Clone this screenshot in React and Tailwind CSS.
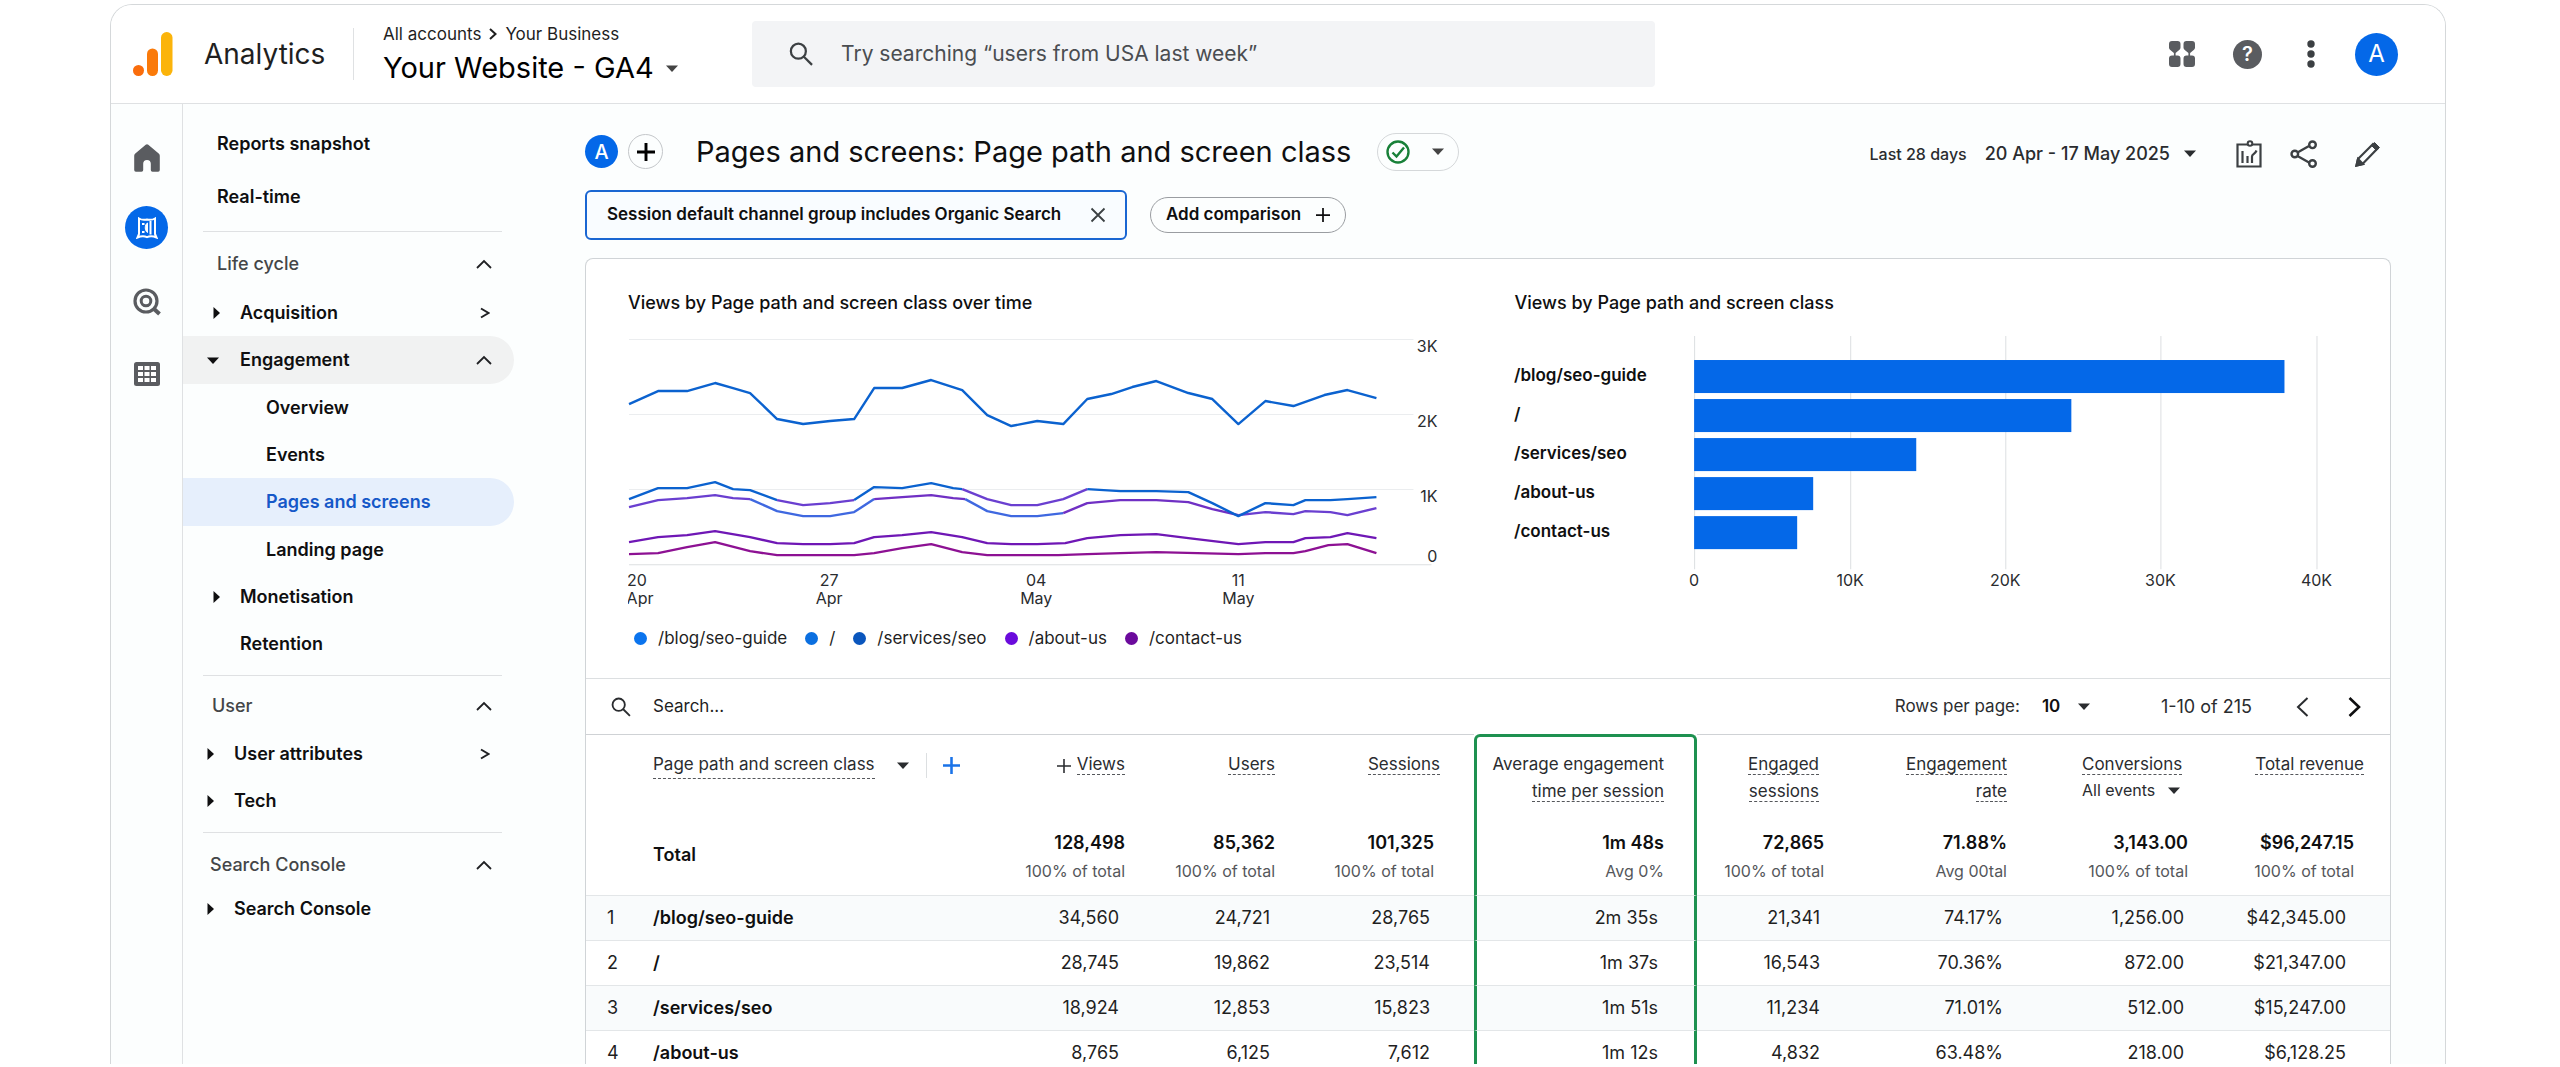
const NAV_ROW = 'flex w-full items-center text-left text-lg font-semibold text-[#0f0f10]';

const Caret = ({ className = '' }) => (
  <svg viewBox="0 0 12 7" className={`h-[7px] w-3 shrink-0 ${className}`} fill="currentColor" aria-hidden="true">
    <path d="M0 0.5h12L6 7z" />
  </svg>
);

const CaretRight = () => (
  <svg viewBox="0 0 7 12" className="h-3 w-[7px]" fill="currentColor" aria-hidden="true">
    <path d="M0.5 0v12L7 6z" />
  </svg>
);

const ChevronUp = () => (
  <svg viewBox="0 0 16 10" className="h-[10px] w-4" fill="none" stroke="#202124" strokeWidth="1.8" aria-hidden="true">
    <path d="M1 9l7-7 7 7" />
  </svg>
);

const Greater = () => (
  <svg viewBox="0 0 10 12" className="h-3 w-[10px]" fill="none" stroke="#202124" strokeWidth="2" aria-hidden="true">
    <path d="M1 1.5l7.5 4.5L1 10.5" />
  </svg>
);

const Plus = ({ className, strokeWidth = 2 }) => (
  <svg viewBox="0 0 16 16" className={className} fill="none" stroke="currentColor" strokeWidth={strokeWidth} aria-hidden="true">
    <path d="M8 0v16M0 8h16" />
  </svg>
);

const SearchIcon = ({ className }) => (
  <svg viewBox="0 0 26 26" className={className} fill="none" stroke="currentColor" strokeWidth="2.4" aria-hidden="true">
    <circle cx="10" cy="10" r="8" />
    <path d="M15.6 15.6l9 9" />
  </svg>
);

function TopBar() {
  return (
    <header className="flex h-[99px] shrink-0 items-center border-b border-[#dfe1e3] bg-white pr-[47px] pl-[22px]">
      <svg viewBox="0 0 40 44" className="h-11 w-10" aria-hidden="true">
        <rect x="28" y="0" width="11.5" height="44" rx="5.7" fill="#fbb40b" />
        <rect x="14" y="16.5" width="11" height="27.5" rx="5.5" fill="#fa7a0a" />
        <circle cx="5.5" cy="38.5" r="5.5" fill="#fa6d0c" />
      </svg>
      <span className="ml-[31px] w-[149px] text-[28px] text-[#1f1f1f]">Analytics</span>
      <div className="flex h-[52px] flex-col justify-center border-l border-[#dfe1e3] pl-[29px]">
        <div className="flex items-center gap-2 pt-1 text-[17px] leading-6 text-[#1f1f1f]">
          <a href="#accounts">All accounts</a>
          <svg viewBox="0 0 8 12" className="h-3 w-2" fill="none" stroke="currentColor" strokeWidth="2" aria-hidden="true">
            <path d="M1 1l5.5 5L1 11" />
          </svg>
          <a href="#business">Your Business</a>
        </div>
        <button type="button" className="flex items-center gap-3 text-[29px] leading-11 text-black">
          Your Website - GA4
          <Caret className="text-[#444]" />
        </button>
      </div>
      <label className="ml-[74px] flex h-[66px] w-[903px] items-center gap-7 rounded-sm bg-[#f3f4f6] px-[37px] text-[#3c4043]">
        <SearchIcon className="size-[26px]" />
        <input
          type="text"
          aria-label="Search analytics"
          placeholder="Try searching “users from USA last week”"
          className="w-full bg-transparent text-[21px] outline-none placeholder:text-[#4a4d51]"
        />
      </label>
      <div className="ml-auto flex items-center text-[#5a5c60]">
        <button type="button" aria-label="Apps">
          <svg viewBox="0 0 26 26" className="size-[26px]" fill="currentColor" aria-hidden="true">
            <path d="M3 0h5.500a3 3 0 0 1 3 3v3.500a3 3 0 0 1-1 2.200L6.600 12v2.500h1.900a3 3 0 0 1 3 3V23a3 3 0 0 1-3 3H3a3 3 0 0 1-3-3v-5.500a3 3 0 0 1 3-3h1.900V12L1 8.700a3 3 0 0 1-1-2.200V3a3 3 0 0 1 3-3z" />
            <path d="M17.500 0H23a3 3 0 0 1 3 3v3.500a3 3 0 0 1-1 2.200L21.100 12v2.500H23a3 3 0 0 1 3 3V23a3 3 0 0 1-3 3h-5.500a3 3 0 0 1-3-3v-5.500a3 3 0 0 1 3-3h1.900V12l-3.900-3.300a3 3 0 0 1-1-2.200V3a3 3 0 0 1 3-3z" />
          </svg>
        </button>
        <button type="button" aria-label="Help" className="ml-[38px] flex size-[29px] items-center justify-center rounded-full bg-[#5a5c60] text-xl font-semibold text-white">
          ?
        </button>
        <button type="button" aria-label="More" className="ml-[45px]">
          <svg viewBox="0 0 8 28" className="h-7 w-2" fill="#3c4043" aria-hidden="true">
            <circle cx="4" cy="4" r="3.7" />
            <circle cx="4" cy="14" r="3.7" />
            <circle cx="4" cy="24" r="3.7" />
          </svg>
        </button>
        <button type="button" aria-label="Account" className="ml-10 flex size-[43px] items-center justify-center rounded-full bg-[#0468e8] text-2xl text-white">
          A
        </button>
      </div>
    </header>
  );
}

function Rail() {
  return (
    <nav aria-label="Sections" className="flex w-[72px] shrink-0 flex-col items-center border-r border-[#dfe1e3] pt-10 text-[#5a5c60]">
      <button type="button" aria-label="Home">
        <svg viewBox="0 0 26 28" className="h-7 w-[26px]" fill="currentColor" aria-hidden="true">
          <path d="M13 0.3a2 2 0 0 1 1.3.5l10.400 8.600a3 3 0 0 1 1.100 2.300V26a1.700 1.700 0 0 1-1.700 1.700H18.500a1.700 1.700 0 0 1-1.700-1.700v-6.200a3.800 3.800 0 0 0-7.600 0V26a1.700 1.700 0 0 1-1.700 1.700H1.900A1.700 1.700 0 0 1 .2 26V11.700a3 3 0 0 1 1.100-2.300L11.700.8a2 2 0 0 1 1.300-.5z" />
        </svg>
      </button>
      <button type="button" aria-label="Reports" className="mt-[34px] flex size-[43px] items-center justify-center rounded-full bg-[#0468e8]">
        <svg viewBox="0 0 22 22" className="size-[22px]" fill="none" stroke="#fff" strokeWidth="2" aria-hidden="true">
          <path d="M3 1.500c2.500 1.500 5.500 1.500 8 1 2.500.5 5.500.5 8-1v15.500l1.500 3.500c-3.500-1.500-6.500-1.800-9.500-.3-3-1.500-6-1.200-9.500.3L3 17z" />
          <path d="M14.500 4v13.500" />
          <path d="M6 7h2.500M6 15h2.500" />
          <path d="M11.500 6v9.500c-3-1.500-3-8 0-9.500z" fill="#fff" strokeWidth="1" />
        </svg>
      </button>
      <button type="button" aria-label="Explore" className="mt-[39px]">
        <svg viewBox="0 0 28 28" className="size-7" fill="none" stroke="currentColor" aria-hidden="true">
          <circle cx="13" cy="13" r="11" strokeWidth="3.2" />
          <circle cx="13" cy="13" r="4.8" strokeWidth="3" />
          <path d="M20 20l6.5 6" strokeWidth="4" />
        </svg>
      </button>
      <button type="button" aria-label="Library" className="mt-[46px]">
        <svg viewBox="0 0 26 24" className="h-6 w-[26px]" aria-hidden="true">
          <rect width="26" height="24" rx="2.5" fill="#5a5c60" />
          {[4, 10.5, 17].map((x) =>
            [4, 10, 16].map((y) => <rect key={`${x}-${y}`} x={x} y={y} width="5" height="4" fill="#fff" />),
          )}
        </svg>
      </button>
    </nav>
  );
}

function Group({ label, pad }) {
  return (
    <button type="button" className={`flex h-12 w-full items-center justify-between pr-[22px] text-lg font-medium text-[#444648] ${pad}`}>
      {label}
      <ChevronUp />
    </button>
  );
}

function Branch({ label, arrow = true, more = false, pad = 'pl-[30px]' }) {
  return (
    <button type="button" className={`${NAV_ROW} h-[47px] pr-6 ${pad}`}>
      <span className="w-[27px]">{arrow && <CaretRight />}</span>
      <span className="flex-1">{label}</span>
      {more && <Greater />}
    </button>
  );
}

function Sidebar() {
  return (
    <nav aria-label="Reports" className="flex w-[331px] shrink-0 flex-col pt-[13px]">
      <a href="#snapshot" className={`${NAV_ROW} h-[53px] pl-[34px]`}>Reports snapshot</a>
      <a href="#realtime" className={`${NAV_ROW} h-[53px] pl-[34px]`}>Real-time</a>
      <hr className="mt-2 mr-3 ml-5 border-[#dfe1e3]" />
      <div className="mt-2 mb-px"><Group label="Life cycle" pad="pl-[34px]" /></div>
      <Branch label="Acquisition" more />
      <button type="button" className={`${NAV_ROW} h-12 rounded-r-full bg-[#f1f2f2] pr-[22px] pl-6`}>
        <Caret className="mr-[21px]" />
        <span className="flex-1">Engagement</span>
        <ChevronUp />
      </button>
      <a href="#overview" className={`${NAV_ROW} h-[47px] pl-[83px]`}>Overview</a>
      <a href="#events" className={`${NAV_ROW} h-[47px] pl-[83px]`}>Events</a>
      <a href="#pages" aria-current="page" className="flex h-12 items-center rounded-r-full bg-[#e6effc] pl-[83px] text-lg font-semibold text-[#1558c8]">
        Pages and screens
      </a>
      <a href="#landing" className={`${NAV_ROW} h-[47px] pl-[83px]`}>Landing page</a>
      <Branch label="Monetisation" />
      <Branch label="Retention" arrow={false} />
      <hr className="mt-2 mr-3 ml-5 border-[#dfe1e3]" />
      <div className="mt-[6px]"><Group label="User" pad="pl-[29px]" /></div>
      <Branch label="User attributes" more pad="pl-6" />
      <Branch label="Tech" pad="pl-6" />
      <hr className="mt-2 mr-3 ml-5 border-[#dfe1e3]" />
      <div className="mt-2 -mb-1"><Group label="Search Console" pad="pl-[27px]" /></div>
      <Branch label="Search Console" pad="pl-6" />
    </nav>
  );
}

function ReportHeader() {
  return (
    <div className="flex h-[47px] items-center">
      <span className="flex size-[33px] items-center justify-center rounded-full bg-[#0468e8] text-xl font-medium text-white">A</span>
      <button type="button" aria-label="Add segment" className="ml-[10px] flex size-[35px] items-center justify-center rounded-full border border-[#c4c7ca] text-black">
        <Plus className="size-[18px]" strokeWidth={2.6} />
      </button>
      <h1 className="ml-[33px] text-[29px] text-[#0f0f10]">Pages and screens: Page path and screen class</h1>
      <button type="button" aria-label="Report status" className="ml-[26px] flex h-[38px] w-[82px] items-center justify-between rounded-full border border-[#d5d8da] pr-[14px] pl-2 text-[#444]">
        <svg viewBox="0 0 24 24" className="size-6" fill="none" stroke="#188038" strokeWidth="2.4" aria-hidden="true">
          <circle cx="12" cy="12" r="10.5" />
          <path d="M6.5 12.500l4 4 7.500-9" />
        </svg>
        <Caret />
      </button>
      <button type="button" className="ml-auto flex items-center pt-1 text-lg font-medium text-[#2a2c2f]">
        <span className="mr-[18px] text-base">Last 28 days</span>
        20 Apr - 17 May 2025
        <Caret className="ml-[14px]" />
      </button>
      <div className="ml-10 flex items-center pt-1 text-[#3c4043]">
        <button type="button" aria-label="Insights">
          <svg viewBox="0 0 26 28" className="h-7 w-[26px]" fill="none" stroke="currentColor" strokeWidth="2.2" aria-hidden="true">
            <path d="M1.500 4.500h23v22h-23zM6.500 11v12M11.500 23v-7M16 23v-6.500c0-2.500 3-2 4.500-6" />
            <circle cx="14" cy="3.500" r="2.300" fill="#fff" strokeWidth="2" />
          </svg>
        </button>
        <button type="button" aria-label="Share" className="ml-7">
          <svg viewBox="0 0 28 28" className="size-7" fill="none" stroke="currentColor" strokeWidth="2.4" aria-hidden="true">
            <path d="M7.500 12.500L19 6M7.500 16L19 22.500" />
            <circle cx="4.800" cy="14" r="3.300" />
            <circle cx="22.500" cy="4.800" r="3.300" />
            <circle cx="22.500" cy="23.500" r="3.300" />
          </svg>
        </button>
        <button type="button" aria-label="Edit" className="ml-[37px]">
          <svg viewBox="0 0 26 26" className="size-[26px]" fill="none" stroke="currentColor" strokeWidth="2.2" aria-hidden="true">
            <path d="M1.500 24.500l1.500-6.500L18 3l4.500 4.500L7.500 23z" />
            <path d="M1.500 24.500l1.500-6.500 5 5z" fill="currentColor" />
            <path d="M16.500 4.500l5 5 3-3-5-5z" fill="currentColor" strokeWidth="1" />
          </svg>
        </button>
      </div>
    </div>
  );
}

function Comparisons() {
  return (
    <div className="mt-[15px] flex h-[50px] items-center">
      <div className="flex h-[50px] w-[542px] items-center justify-between rounded-md border-2 border-[#1a66d2] bg-[#f9fcff] pr-[19px] pl-5 text-[17px] font-semibold text-[#0f0f10]">
        Session default channel group includes Organic Search
        <button type="button" aria-label="Remove comparison">
          <svg viewBox="0 0 16 16" className="size-4" fill="none" stroke="#3c4043" strokeWidth="1.8" aria-hidden="true">
            <path d="M1.500 1.500l13 13M14.500 1.500l-13 13" />
          </svg>
        </button>
      </div>
      <button type="button" className="ml-[23px] flex h-9 w-[196px] items-center justify-between rounded-full border border-[#9a9da1] px-[15px] text-[17px] font-semibold text-[#0f0f10]">
        Add comparison
        <Plus className="size-[14px]" />
      </button>
    </div>
  );
}

const BLUE = '#0b62cf';
const VIOLET = '#6a3fd0';

const SERIES = [
  { color: BLUE, points: '1,75 30,62 59,62 87,54 105,59 122,64 149,90 175,95 202,92 226,90 246,59 274,59 303,51 334,61 359,86 383,97 409,92 435,95 459,70 483,65 504,58 528,52 560,64 584,70 610,95 637,72 665,77 696,66 719,61 748,69' },
  { color: BLUE, points: '1,170 30,159 59,159 87,153 105,160 122,161 149,171' },
  { color: VIOLET, points: '149,171 175,176 202,174 226,171' },
  { color: BLUE, points: '226,171 246,158 274,159 303,154 325,159 334,160' },
  { color: VIOLET, points: '334,160 359,170 383,176 409,176 435,170 459,160' },
  { color: VIOLET, points: '1,178 30,171 59,169 87,166 105,169 122,170' },
  { color: '#3f68e0', points: '122,170 149,182 175,187 202,187 226,183 246,170' },
  { color: '#7030c4', points: '246,170 274,168 303,166 325,169 337,170' },
  { color: '#3f68e0', points: '337,170 359,182 383,187 409,187 435,184' },
  { color: '#7030c4', points: '435,184 459,174 492,171 528,171 560,173 584,180 610,186' },
  { color: VIOLET, points: '610,186 637,183 665,185 677,182 702,183 719,186 748,179' },
  { color: BLUE, points: '459,160 492,162 528,162 560,163 584,174 610,187 637,174 665,176 677,171 702,171 719,170 748,168' },
  { color: '#6f17b5', points: '1,213 30,208 59,206 87,202 122,208 149,214 175,215 202,215 226,214 246,208 274,206 303,203 334,208 359,214 383,215 409,215 437,214 459,209 492,206 528,205 560,209 610,215 637,213 665,213 677,209 702,208 719,204 748,209' },
  { color: '#8d1193', points: '1,225 30,224 59,218 87,213 122,222 149,226 226,226 246,224 274,219 303,215 334,223 359,226 430,226 459,225 492,224 528,223 610,225 637,224 665,224 677,222 700,216 719,215 748,224' },
];

function LineChart() {
  return (
    <svg viewBox="0 0 810 285" className="mt-3 block h-auto w-full" role="img" aria-label="Views over time">
      {[10, 85, 160, 235].map((y) => (
        <path key={y} d={`M1 ${y}.5H${y === 235 ? 803 : 785}`} stroke={y === 235 ? '#dcdfe1' : '#ebedef'} />
      ))}
      {SERIES.map((s, i) => (
        <polyline key={i} points={s.points} fill="none" stroke={s.color} strokeWidth="2.4" strokeLinejoin="round" />
      ))}
      <g fontSize="16" fill="#2a2c2f" textAnchor="end">
        <text x="809" y="23">3K</text>
        <text x="809" y="98">2K</text>
        <text x="809" y="173">1K</text>
        <text x="809" y="233">0</text>
      </g>
      <g fontSize="16" fill="#2a2c2f" textAnchor="middle">
        {[[9, '20', 12, 'Apr'], [201, '27', 201, 'Apr'], [408, '04', 408, 'May'], [610, '11', 610, 'May']].map(([x, day, mx, month]) => (
          <g key={day}>
            <text x={x} y="257">{day}</text>
            <text x={mx} y="275">{month}</text>
          </g>
        ))}
      </g>
    </svg>
  );
}

const LEGEND = [
  ['/blog/seo-guide', 'bg-[#0b74ee]'],
  ['/', 'bg-[#0b6fe0]'],
  ['/services/seo', 'bg-[#0a56bd]'],
  ['/about-us', 'bg-[#6a0bdc]'],
  ['/contact-us', 'bg-[#6b0a9c]'],
];

const BARS = [
  ['/blog/seo-guide', 590],
  ['/', 377],
  ['/services/seo', 222],
  ['/about-us', 119],
  ['/contact-us', 103],
];

function BarChart() {
  return (
    <svg viewBox="0 0 820 260" className="mt-3 block h-auto w-full" role="img" aria-label="Views by page path">
      {[180, 336, 491, 646, 802].map((x, i) => (
        <g key={x}>
          <path d={`M${x}.5 7V240`} stroke="#dcdfe1" />
          <text x={x} y="257" fontSize="16" fill="#2a2c2f" textAnchor="middle">{i === 0 ? '0' : `${i}0K`}</text>
        </g>
      ))}
      {BARS.map(([label, width], i) => (
        <g key={label}>
          <text x="0" y={52 + i * 39} fontSize="17" fontWeight="600" fill="#0f0f10">{label}</text>
          <rect x="180" y={31 + i * 39} width={width} height="33" fill="#0468e8" />
        </g>
      ))}
    </svg>
  );
}

const COLUMNS = [
  { w: 'w-[155px]', head: 'pr-[15px]', total: 'pr-[15px]', row: 'pr-[21px]' },
  { w: 'w-[150px]', head: 'pr-[15px]', total: 'pr-[15px]', row: 'pr-5' },
  { w: 'w-[184px]', head: 'pr-[34px]', total: 'pr-10', row: 'pr-11' },
  { w: 'w-[223px]', head: 'pr-[30px]', total: 'pr-[30px]', row: 'pr-9' },
  { w: 'w-[143px]', head: 'pr-[21px]', total: 'pr-4', row: 'pr-5' },
  { w: 'w-[183px]', head: 'pr-4', total: 'pr-4', row: 'pr-5' },
  { w: 'w-[181px]', head: 'pr-6', total: 'pr-4', row: 'pr-5' },
  { w: 'w-[186px]', head: 'pr-[26px]', total: 'pr-9', row: 'pr-11' },
];

const HEADS = [['Views'], ['Users'], ['Sessions'], ['Average engagement', 'time per session'], ['Engaged', 'sessions'], ['Engagement', 'rate'], ['Conversions'], ['Total revenue']];

const TOTALS = [
  ['128,498', '100% of total'],
  ['85,362', '100% of total'],
  ['101,325', '100% of total'],
  ['1m 48s', 'Avg 0%'],
  ['72,865', '100% of total'],
  ['71.88%', 'Avg 00tal'],
  ['3,143.00', '100% of total'],
  ['$96,247.15', '100% of total'],
];

const ROWS = [
  ['/blog/seo-guide', '34,560', '24,721', '28,765', '2m 35s', '21,341', '74.17%', '1,256.00', '$42,345.00'],
  ['/', '28,745', '19,862', '23,514', '1m 37s', '16,543', '70.36%', '872.00', '$21,347.00'],
  ['/services/seo', '18,924', '12,853', '15,823', '1m 51s', '11,234', '71.01%', '512.00', '$15,247.00'],
  ['/about-us', '8,765', '6,125', '7,612', '1m 12s', '4,832', '63.48%', '218.00', '$6,128.25'],
];

const AVG = 3;
const GREEN_SIDES = 'border-x-3 border-x-[#1e9150]';
const DASH = 'border-b border-dashed border-[#55575b]';

function TableToolbar() {
  return (
    <div className="flex h-[56px] items-center border-t border-[#dcdfe1] pr-[29px] pl-[25px] text-[17px] text-[#2a2c2f]">
      <label className="flex flex-1 items-center gap-[22px]">
        <SearchIcon className="size-5" />
        <input type="text" aria-label="Search table" placeholder="Search..." className="w-60 bg-transparent outline-none placeholder:text-[#1f1f1f]" />
      </label>
      <label htmlFor="rows-per-page">Rows per page:</label>
      <div className="relative ml-[22px] flex items-center">
        <select id="rows-per-page" className="w-12 appearance-none bg-transparent font-semibold text-[#0f0f10]">
          <option>10</option>
        </select>
        <Caret className="pointer-events-none absolute right-0" />
      </div>
      <span className="ml-[71px] text-lg">1-10 of 215</span>
      <button type="button" aria-label="Previous page" className="ml-[44px]">
        <svg viewBox="0 0 13 20" className="h-5 w-[13px]" fill="none" stroke="currentColor" strokeWidth="2" aria-hidden="true">
          <path d="M11.500 1L2 10l9.500 9" />
        </svg>
      </button>
      <button type="button" aria-label="Next page" className="ml-[39px]">
        <svg viewBox="0 0 13 20" className="h-5 w-[13px]" fill="none" stroke="#0f0f10" strokeWidth="2.6" aria-hidden="true">
          <path d="M1.500 1L11 10l-9.500 9" />
        </svg>
      </button>
    </div>
  );
}

function DataTable() {
  return (
    <table className="w-full table-fixed border-separate border-spacing-0 text-right text-[#1f1f1f]">
      <colgroup>
        <col className="w-[67px]" />
        <col />
        {COLUMNS.map((c, i) => <col key={i} className={c.w} />)}
      </colgroup>
      <thead>
        <tr className="h-20 align-top text-[17px] leading-[27px] text-[#2a2c2f]">
          <th className="border-t border-[#cfd2d5]" />
          <th className="border-t border-[#cfd2d5] pt-4 text-left font-normal">
            <div className="flex items-center">
              <button type="button" className="flex items-center">
                <span className={DASH}>Page path and screen class</span>
                <Caret className="ml-[22px]" />
              </button>
              <button type="button" aria-label="Add dimension" className="ml-[17px] border-l border-[#dcdfe1] py-1 pl-4 text-[#1a73e8]">
                <Plus className="size-[17px]" strokeWidth={2.4} />
              </button>
            </div>
          </th>
          {HEADS.map((lines, i) => (
            <th
              key={lines[0]}
              className={`font-normal ${COLUMNS[i].head} ${i === AVG ? `rounded-t-md border-t-3 border-t-[#1e9150] pt-[14px] ${GREEN_SIDES}` : 'border-t border-[#cfd2d5] pt-4'}`}
            >
              {i === 0 && <Plus className="mr-[6px] inline size-[14px]" strokeWidth={1.8} />}
              {i === 6 ? (
                <div className="ml-auto w-[98px] text-left">
                  <span className={DASH}>Conversions</span>
                  <button type="button" className="flex w-full items-center justify-between text-base leading-[25px]">
                    All events
                    <Caret />
                  </button>
                </div>
              ) : (
                lines.map((line, j) => (
                  <span key={line}>
                    {j > 0 && <br />}
                    <span className={i === AVG && j === 0 ? '' : DASH}>{line}</span>
                  </span>
                ))
              )}
            </th>
          ))}
        </tr>
      </thead>
      <tbody>
        <tr className="h-[81px] font-semibold text-[#0f0f10]">
          <td />
          <td className="text-left text-lg">Total</td>
          {TOTALS.map(([value, note], i) => (
            <td key={i} className={`pt-1 ${COLUMNS[i].total} ${i === AVG ? GREEN_SIDES : ''}`}>
              <div className="text-lg leading-[29px]">{value}</div>
              <div className="text-base leading-[29px] font-normal text-[#55575b]">{note}</div>
            </td>
          ))}
        </tr>
        {ROWS.map(([path, ...cells], r) => (
          <tr key={path} className="h-[45px] text-lg odd:bg-white even:bg-[#f9fbfc]">
            <td className="border-t border-[#e3e6e8] pl-[21px] text-left">{r + 1}</td>
            <td className="border-t border-[#e3e6e8] text-left font-semibold text-[#0f0f10]">{path}</td>
            {cells.map((cell, i) => (
              <td key={i} className={`border-t border-t-[#e3e6e8] ${COLUMNS[i].row} ${i === AVG ? GREEN_SIDES : ''}`}>{cell}</td>
            ))}
          </tr>
        ))}
      </tbody>
    </table>
  );
}

export default function App() {
  return (
    <div className="h-screen overflow-hidden bg-white pt-1 pr-[114px] pb-[3px] pl-[110px] font-['Inter','Liberation_Sans',sans-serif]">
      <div className="flex h-full flex-col overflow-hidden rounded-t-[22px] border border-b-0 border-[#d5d8da] bg-[#fcfefe]">
        <TopBar />
        <div className="flex min-h-0 flex-1">
          <Rail />
          <Sidebar />
          <main className="min-w-0 flex-1 pt-6 pr-[54px] pl-[71px]">
            <div className="pr-[10px]"><ReportHeader /></div>
            <Comparisons />
            <section className="mt-[18px] rounded-t-lg border border-b-0 border-[#d0d4d7] bg-white">
              <div className="grid grid-cols-[810fr_820fr] gap-[76px] pt-[30px] pr-[55px] pb-[28px] pl-[42px]">
                <div>
                  <h2 className="text-lg leading-7 font-medium text-[#0f0f10]">Views by Page path and screen class over time</h2>
                  <LineChart />
                  <ul className="mt-3 flex items-center gap-[18px] pl-[6px] text-[17px] leading-6 text-[#1f1f1f]">
                    {LEGEND.map(([label, dot]) => (
                      <li key={label} className="flex items-center gap-[11px]">
                        <span className={`size-[13px] rounded-full ${dot}`} />
                        {label}
                      </li>
                    ))}
                  </ul>
                </div>
                <div>
                  <h2 className="text-lg leading-7 font-medium text-[#0f0f10]">Views by Page path and screen class</h2>
                  <BarChart />
                </div>
              </div>
              <TableToolbar />
              <DataTable />
            </section>
          </main>
        </div>
      </div>
    </div>
  );
}
